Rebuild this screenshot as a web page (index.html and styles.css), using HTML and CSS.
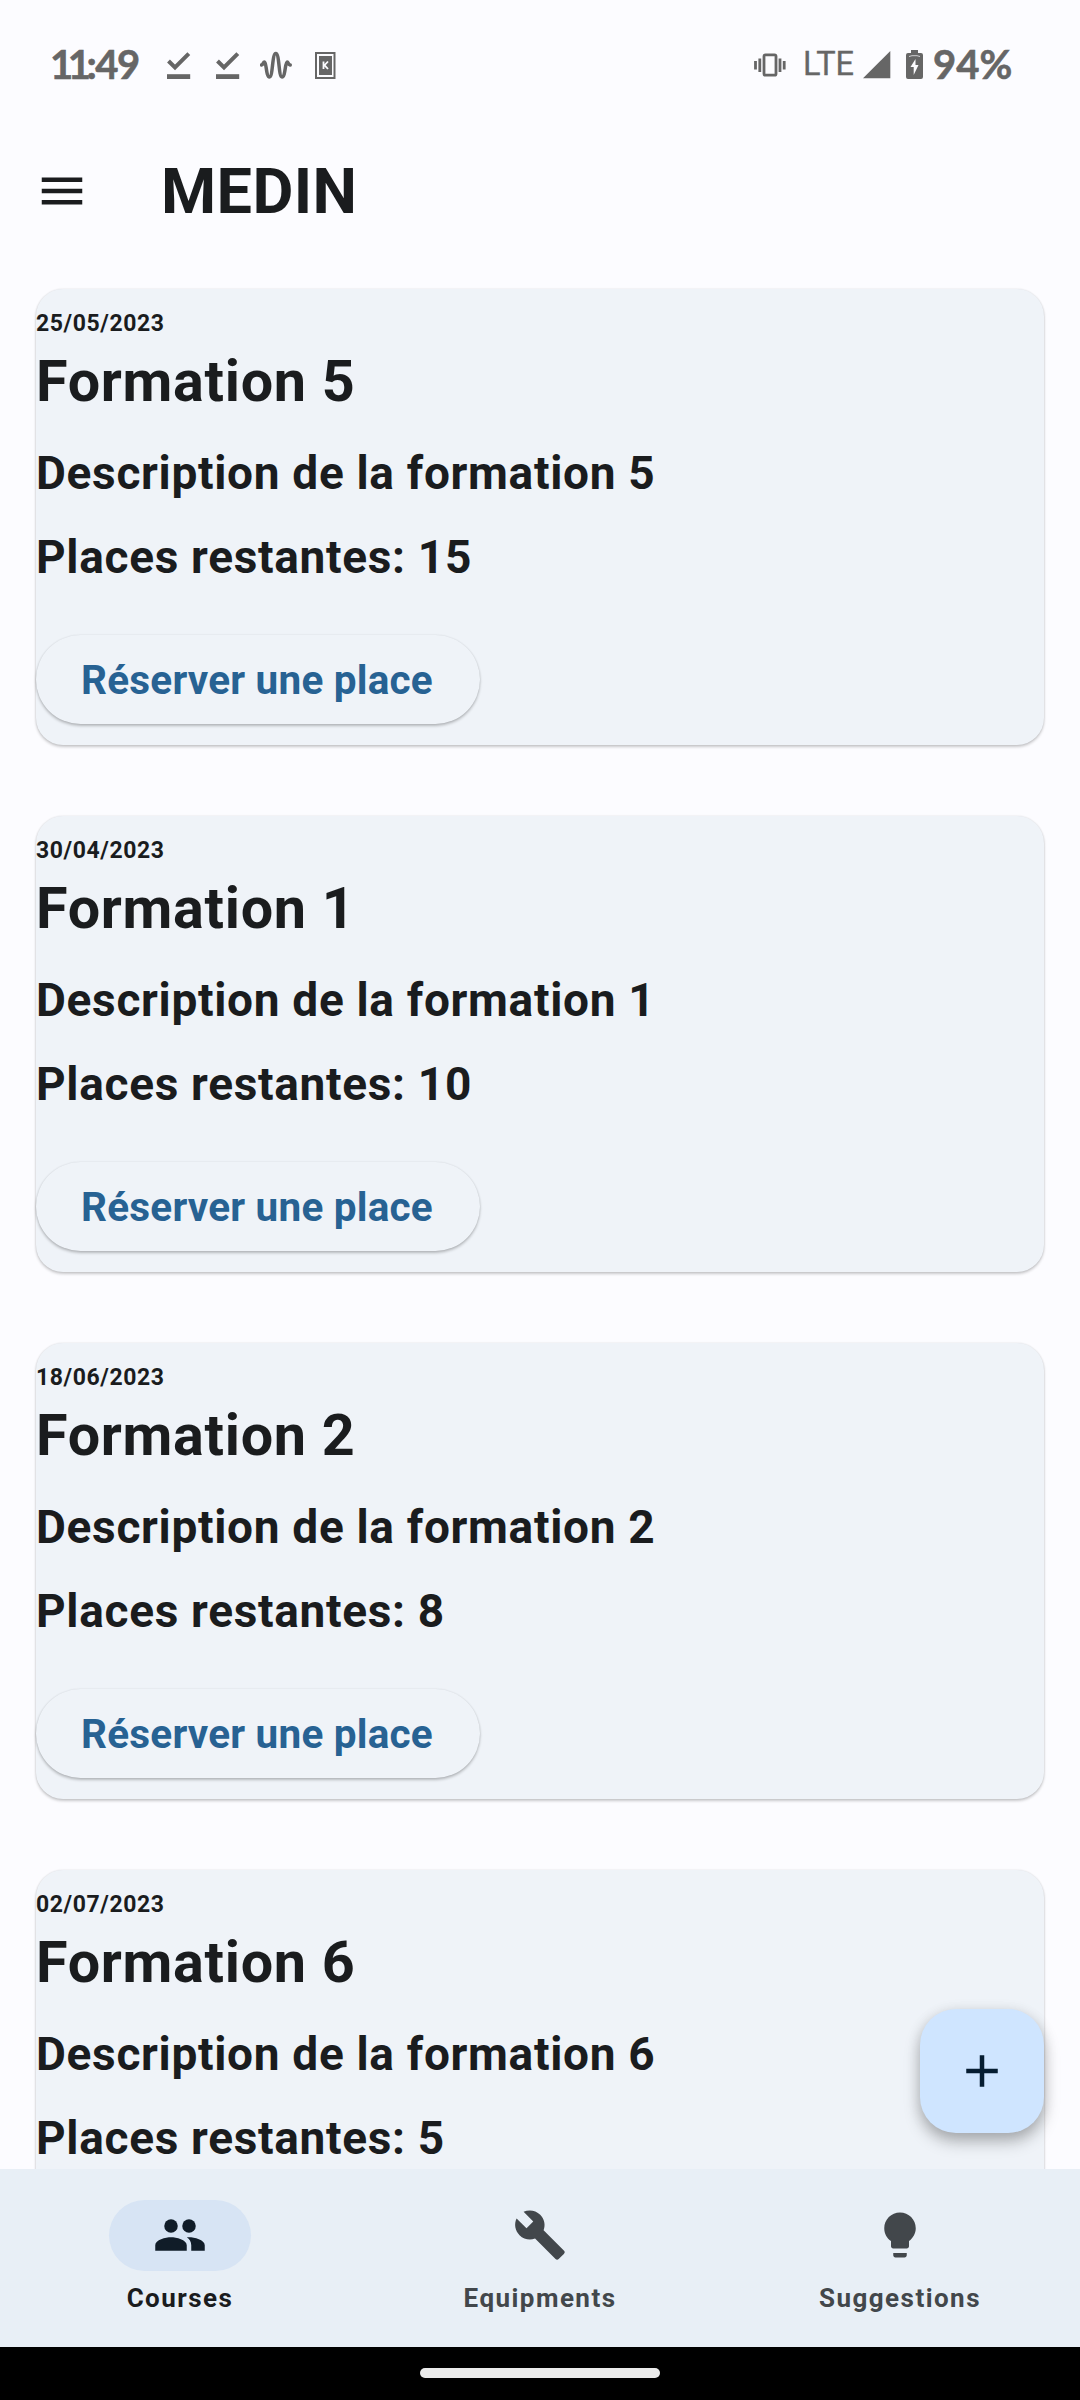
FILE: index.html
```html
<!DOCTYPE html>
<html lang="fr">
<head>
<meta charset="utf-8">
<title>MEDIN</title>
<link rel="stylesheet" href="styles.css">
</head>
<body>
<div class="app">
  <div class="status">
    <span class="clock"><span class="ones">11</span>:49</span>
    <svg class="st-icon check" width="24" height="30" viewBox="0 0 24 30"><path d="M1.500 11l6.500 6.500L21.800 3.600" fill="none" stroke="currentColor" stroke-width="4"/><path d="M0 24.200h23.200v4.800H0z" fill="currentColor"/></svg>
    <svg class="st-icon check" width="24" height="30" viewBox="0 0 24 30"><path d="M1.500 11l6.500 6.500L21.800 3.600" fill="none" stroke="currentColor" stroke-width="4"/><path d="M0 24.200h23.200v4.800H0z" fill="currentColor"/></svg>
    <svg class="st-icon wave" width="32" height="30" viewBox="0 0 32 30"><path d="M1.500 15C3.500 14.500 3 12 4.500 12C6.500 12 6 27 9.500 27C13 27 12 3.500 15.800 3.500S18.500 27 22 27C25.500 27 25 12 27.200 12C28.500 12 28 14.500 30.200 15" fill="none" stroke="currentColor" stroke-width="3.500" stroke-linecap="round"/></svg>
    <svg class="st-icon card-k" width="21" height="30" viewBox="0 0 21 30"><path d="M1 3h18.500v25H1z" fill="none" stroke="currentColor" stroke-width="2"/><path d="M4 6h13v19H4z" fill="currentColor"/><path d="M8.500 11.500v7.500M13 11.500L9.500 15.200l3.500 3.800" fill="none" stroke="#fcfcff" stroke-width="1.800"/></svg>
    <span class="spacer"></span>
    <svg class="st-icon vibrate" width="32" height="30" viewBox="0 0 32 30"><rect x="10" y="4.800" width="12" height="20.400" rx="1.500" fill="none" stroke="currentColor" stroke-width="2.800"/><path d="M1.500 11v8.500M5.800 8.500v13.500M26 8.500v13.500M30.200 11v8.500" stroke="currentColor" stroke-width="2.800"/></svg>
    <span class="lte">LTE</span>
    <svg class="st-icon signal" width="28" height="30" viewBox="0 0 28 30"><path d="M0 28.300L27.300 1v27.300z" fill="currentColor"/></svg>
    <svg class="st-icon battery" width="17" height="30" viewBox="0 0 17 30"><path d="M5 0h7v3h3q2 0 2 2v22q0 2-2 2H2q-2 0-2-2V5q0-2 2-2h3z" fill="currentColor"/><path d="M3 6.500L6 5.700h5l3 .8" fill="none" stroke="#fcfcff" stroke-width=".7"/><path d="M9.500 9L4.500 17h3.200v8L12.500 15H9.500z" fill="#fcfcff"/></svg>
    <span class="percent">94%</span>
  </div>

  <header class="topbar">
    <svg class="menu" width="54" height="54" viewBox="0 0 24 24"><path d="M3 18h18v-2H3v2zm0-5h18v-2H3v2zm0-7v2h18V6H3z" fill="currentColor"/></svg>
    <h1 class="title">MEDIN</h1>
  </header>

  <main class="list">
    <article class="card">
      <div class="date">25/05/2023</div>
      <h2 class="name">Formation 5</h2>
      <p class="line">Description de la formation 5</p>
      <p class="line">Places restantes: 15</p>
      <button class="book">Réserver une place</button>
    </article>
    <article class="card">
      <div class="date">30/04/2023</div>
      <h2 class="name">Formation 1</h2>
      <p class="line">Description de la formation 1</p>
      <p class="line">Places restantes: 10</p>
      <button class="book">Réserver une place</button>
    </article>
    <article class="card">
      <div class="date">18/06/2023</div>
      <h2 class="name">Formation 2</h2>
      <p class="line">Description de la formation 2</p>
      <p class="line">Places restantes: 8</p>
      <button class="book">Réserver une place</button>
    </article>
    <article class="card">
      <div class="date">02/07/2023</div>
      <h2 class="name">Formation 6</h2>
      <p class="line">Description de la formation 6</p>
      <p class="line">Places restantes: 5</p>
    </article>
    <button class="fab" aria-label="Ajouter"><svg width="54" height="54" viewBox="0 0 24 24"><path d="M19 13h-6v6h-2v-6H5v-2h6V5h2v6h6v2z" fill="currentColor"/></svg></button>
  </main>

  <nav class="nav">
    <a class="tab active">
      <span class="pill"><svg width="54" height="54" viewBox="0 0 24 24"><circle cx="8" cy="8" r="3"/><circle cx="16" cy="8" r="3"/><path d="M16 13c-.29 0-.62.020-.97.050 1.160.84 1.970 1.970 1.970 3.450V19h6v-2.500c0-2.330-4.670-3.500-7-3.500zM8 13c-2.330 0-7 1.170-7 3.500V19h14v-2.500c0-2.330-4.670-3.500-7-3.500z"/></svg></span>
      <span class="label">Courses</span>
    </a>
    <a class="tab">
      <span class="pill"><svg width="54" height="54" viewBox="0 0 24 24"><path d="M22.700 19l-9.100-9.100c.9-2.300.4-5-1.500-6.900-2-2-5-2.400-7.400-1.300L9 6 6 9 1.600 4.700C.4 7.100.9 10.100 2.900 12.100c1.900 1.900 4.600 2.400 6.900 1.500l9.100 9.100c.4.4 1 .4 1.400 0l2.300-2.300c.5-.4.5-1.100.1-1.400z"/></svg></span>
      <span class="label">Equipments</span>
    </a>
    <a class="tab">
      <span class="pill"><svg width="54" height="54" viewBox="0 0 24 24"><path d="M9 21c0 .5.4 1 1 1h4c.6 0 1-.5 1-1v-1H9v1zm3-19C8.100 2 5 5.100 5 9c0 2.400 1.200 4.500 3 5.700V17c0 .5.4 1 1 1h6c.6 0 1-.5 1-1v-2.300c1.800-1.300 3-3.400 3-5.700 0-3.900-3.100-7-7-7z"/></svg></span>
      <span class="label">Suggestions</span>
    </a>
  </nav>
  <div class="gesture"><span class="handle"></span></div>
</div>
</body>
</html>
```
FILE: styles.css
```css
* { box-sizing: border-box; }
body { margin: 0; background: #fcfcff; color: #1a1c1e; font-family: Roboto, sans-serif; }
h1, h2, p { margin: 0; }
button { border: 0; font-family: inherit; }
svg { display: block; flex: none; }
.app { display: flex; flex-direction: column; width: 1080px; height: 2400px; overflow: hidden; }

.status { display: flex; align-items: center; height: 128px; padding: 0 67px 0 50px; color: #666; }
.st-icon { margin-top: 1px; }
.clock, .percent { font: 700 40px/48px Lato, sans-serif; white-space: nowrap; -webkit-text-stroke: .6px currentColor; }
.clock { width: 117px; letter-spacing: -1.400px; }
.ones { letter-spacing: -5.500px; margin-right: 1px; }
.percent { width: 80px; margin-left: 10px; }
.check { margin-right: 25px; }
.wave { margin: 1px 23px 0 -5px; }
.spacer { flex: 1; }
.lte { width: 51px; margin: 0 9px 0 18px; font-size: 32.500px; line-height: 44px; -webkit-text-stroke: .3px currentColor; }
.vibrate { margin-right: -1px; }
.battery { margin-left: 15px; }

.topbar { display: flex; align-items: center; height: 125px; padding-left: 35px; gap: 72px; }
.title { padding-top: 2px; font-size: 63px; line-height: 76px; font-weight: 700; letter-spacing: .4px; }

.list { position: relative; flex: 1; min-height: 0; overflow: hidden; display: flex; flex-direction: column; gap: 71px; padding: 35.600px 36px 0; }
.card { flex: none; height: 456px; padding-top: 20.400px; border-radius: 27px; background: #eff3f8; box-shadow: 0 2px 3px rgba(0,0,0,.2), 0 0 2px rgba(0,0,0,.12); font-weight: 700; }
.date { font-size: 23px; line-height: 30px; letter-spacing: .6px; }
.name { margin-bottom: 7px; font-size: 57.500px; line-height: 85px; font-weight: 700; letter-spacing: .7px; }
.line { font-size: 46px; line-height: 84px; letter-spacing: .68px; }
.book { display: block; width: 444px; height: 89px; margin-top: 36.500px; padding: 0 2px 0 0; border-radius: 45px; background: #eff3f8; box-shadow: 0 2px 3px rgba(0,0,0,.24), 0 0 2px rgba(0,0,0,.1); color: #276293; font-size: 40.500px; font-weight: 700; letter-spacing: .2px; }

.fab { position: absolute; right: 36px; bottom: 36px; display: flex; align-items: center; justify-content: center; width: 124px; height: 124px; padding: 0; border-radius: 36px; background: #cfe5ff; color: #061d31; box-shadow: 0 9px 16px rgba(0,0,0,.26), 0 2px 14px rgba(0,0,0,.1); }

.nav { display: grid; grid-template-columns: repeat(3, 1fr); height: 178px; padding-top: 31px; background: #e8eff6; }
.tab { display: flex; flex-direction: column; align-items: center; color: #42474b; fill: currentColor; }
.pill { display: flex; align-items: center; justify-content: center; width: 142px; height: 71px; padding-bottom: 1px; border-radius: 36px; }
.active { color: #1a1c1e; }
.active .pill { background: #d7e4f4; color: #101c28; fill: currentColor; }
.label { margin-top: 9px; font-size: 26px; line-height: 36px; font-weight: 700; letter-spacing: 1.450px; }

.gesture { display: flex; justify-content: center; height: 53px; padding-top: 21px; background: #000; }
.handle { width: 240px; height: 10px; border-radius: 5px; background: #ebebeb; }
```
